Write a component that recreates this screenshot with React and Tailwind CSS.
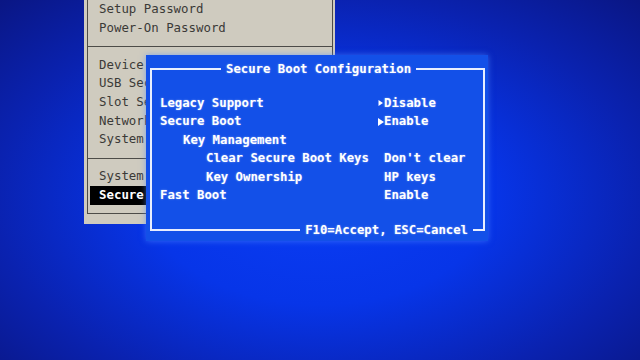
import React from "react";

const MONO = { fontFamily: '"DejaVu Sans Mono", "Liberation Mono", monospace' };

const menuRows = [
  { label: "Setup Password" },
  { label: "Power-On Password" },
  { sep: true },
  { label: "Device Configurations" },
  { label: "USB Security" },
  { label: "Slot Security" },
  { label: "Network Boot" },
  { label: "System IDs" },
  { sep: true },
  { label: "System Management" },
  { label: "Secure Boot Configuration", active: true },
];

const bootRows = [
  { label: "Legacy Support", indent: 0, value: "Disable", arrow: "thin" },
  { label: "Secure Boot", indent: 0, value: "Enable", arrow: "bold" },
  { label: "Key Management", indent: 1 },
  { label: "Clear Secure Boot Keys", indent: 2, value: "Don't clear" },
  { label: "Key Ownership", indent: 2, value: "HP keys" },
  { label: "Fast Boot", indent: 0, value: "Enable" },
];

const Arrow = ({ kind }) => (
  <svg width="6" height="10" viewBox="0 0 6 10" className="shrink-0">
    {kind === "bold" ? (
      <polygon points="0,1 6,5 0,9" fill="white" />
    ) : (
      <polygon points="0.5,2 5,5 0.5,8" fill="white" />
    )}
  </svg>
);

const indents = ["pl-0", "pl-[23px]", "pl-[46px]"];

export default function App() {
  return (
    <div
      className="relative w-[640px] h-[360px] overflow-hidden bg-[radial-gradient(ellipse_at_50%_55%,#0a3df4_0%,#0735e8_38%,#0a22b0_72%,#0a1684_100%)]"
      style={MONO}
    >
      {/* grey main menu, partly covered by the dialog */}
      <div className="absolute left-[84px] top-[-12px] w-[251px] h-[236px] bg-[#cfcbbf] pl-[3px] pr-[2px] pt-[4px] pb-[10px]">
        <div className="h-full border border-[#4d4c48] pt-[7px] px-[2px] overflow-hidden">
          {menuRows.map((row, i) =>
            row.sep ? (
              <div key={i} className="h-[18.6px] flex items-center -mx-[2px]">
                <div className="w-full h-px bg-[#4d4c48]" />
              </div>
            ) : (
              <div
                key={i}
                className={
                  "h-[18.6px] leading-[18.6px] pl-[9px] text-[12.4px] whitespace-nowrap " +
                  (row.active ? "bg-black text-white font-bold" : "text-[#3b3a37]")
                }
              >
                {row.label}
              </div>
            )
          )}
        </div>
      </div>

      {/* Secure Boot Configuration dialog */}
      <div className="absolute left-[146px] top-[55px] w-[342px] h-[186px] bg-[#1350e8] pt-[13px] pl-[4px] pr-[3px] pb-[10px] shadow-[0_0_6px_rgba(80,140,255,0.6)]">
        <div className="relative h-full border-2 border-[#e8eeff] text-white font-bold text-[12.3px] [text-shadow:0_0_2px_rgba(255,255,255,0.45)]">
          <span className="absolute top-[-8px] left-[69px] px-[5px] bg-[#1350e8] leading-[14px] whitespace-nowrap">
            Secure Boot Configuration
          </span>

          <div className="pt-[24px] pl-[8px]">
            {bootRows.map((row, i) => (
              <div key={i} className="flex h-[18.4px] leading-[18.4px] whitespace-nowrap">
                <div className={"w-[218px] " + indents[row.indent]}>{row.label}</div>
                {row.value && (
                  <div className="flex items-center">
                    <div className="w-[6px] flex items-center">
                      {row.arrow && <Arrow kind={row.arrow} />}
                    </div>
                    <span>{row.value}</span>
                  </div>
                )}
              </div>
            ))}
          </div>

          <span className="absolute bottom-[-8px] right-[10px] px-[5px] bg-[#1350e8] leading-[14px] whitespace-nowrap">
            F10=Accept, ESC=Cancel
          </span>
        </div>
      </div>
    </div>
  );
}
